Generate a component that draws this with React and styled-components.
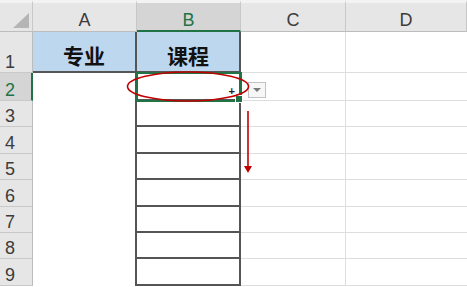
import styled, { createGlobalStyle } from 'styled-components'

const GlobalStyle = createGlobalStyle`
  body {
    margin: 0;
    background: #ffffff;
    overflow: hidden;
    font-family: 'Liberation Sans', Arial, sans-serif;
  }
`

const Sheet = styled.div`
  position: relative;
  width: 467px;
  height: 287px;
  overflow: hidden;
  display: grid;
  grid-template-columns: 33px 104px 104px 105px 1fr;
  grid-template-rows: 32px 41px 28px repeat(7, 26.4px);
  background: #ffffff;
`

const ColHead = styled.div`
  box-sizing: border-box;
  display: flex;
  align-items: center;
  justify-content: center;
  padding-top: 6px;
  background: ${(p) => (p.$active ? '#d5d5d5' : '#e6e6e6')};
  border-right: 1px solid #c8c8c8;
  border-bottom: ${(p) => (p.$active ? '2px solid #217346' : '1px solid #bdbdbd')};
  border-top: 3px solid #f3f3f3;
  color: ${(p) => (p.$active ? '#217346' : '#3c3c3c')};
  font-size: 18px;
  line-height: 1;
`

const Corner = styled(ColHead)`
  position: relative;
  padding: 0;
`

const CornerMark = styled.div`
  position: absolute;
  right: 3px;
  bottom: 3px;
  width: 0;
  height: 0;
  border-left: 16px solid transparent;
  border-bottom: 15px solid #b5b5b5;
`

const RowHead = styled.div`
  box-sizing: border-box;
  display: flex;
  align-items: flex-end;
  padding: 0 0 1px 5px;
  background: ${(p) => (p.$active ? '#d5d5d5' : '#e6e6e6')};
  border-right: ${(p) => (p.$active ? '2px solid #217346' : '1px solid #bcbcbc')};
  border-bottom: 1px solid #c9c9c9;
  color: ${(p) => (p.$active ? '#217346' : '#3c3c3c')};
  font-size: 18px;
  line-height: 1;
`

const Cell = styled.div`
  position: relative;
  box-sizing: border-box;
  display: flex;
  align-items: center;
  justify-content: center;
  padding-top: ${(p) => (p.$title ? '6px' : '0')};
  background: ${(p) => (p.$title ? '#bdd7ee' : '#ffffff')};
  border-right: ${(p) => (p.$right === 'dark' ? '2px solid #555555' : p.$right === 'none' ? '0' : '1px solid #dedede')};
  border-bottom: ${(p) => (p.$bottom === 'dark' ? '2px solid #555555' : p.$bottom === 'none' ? '0' : '1px solid #dedede')};
  outline: ${(p) => (p.$selected ? '2px solid #217346' : 'none')};
  outline-offset: -1px;
  z-index: ${(p) => (p.$selected ? 2 : 0)};
  color: #111111;
  font-family: 'Noto Sans CJK SC', 'Liberation Sans', sans-serif;
  font-size: 21px;
  font-weight: 700;
`

const FillHandle = styled.div`
  position: absolute;
  right: -4px;
  bottom: -4px;
  width: 6px;
  height: 6px;
  background: #217346;
  border: 1px solid #ffffff;
`

const Plus = styled.span`
  position: absolute;
  right: 4px;
  bottom: 2px;
  font-family: 'Liberation Sans', sans-serif;
  font-size: 11px;
  font-weight: 700;
  color: #222222;
  line-height: 1;
`

const DropButton = styled.div`
  position: absolute;
  left: 248px;
  top: 82px;
  width: 18px;
  height: 16px;
  box-sizing: border-box;
  border: 1px solid #c2c2c2;
  background: #f7f7f7;
  display: flex;
  align-items: center;
  justify-content: center;
  z-index: 3;
`

const DropArrow = styled.div`
  width: 0;
  height: 0;
  border-left: 4px solid transparent;
  border-right: 4px solid transparent;
  border-top: 4px solid #7a7a7a;
`

const Overlay = styled.svg`
  position: absolute;
  left: ${(p) => p.$x}px;
  top: ${(p) => p.$y}px;
  z-index: 4;
  overflow: visible;
`

const cols = ['A', 'B', 'C', 'D']

function bodyRow(n) {
  return (
    <>
      <RowHead key={'h' + n} $active={n === 2}>{n}</RowHead>
      <Cell $right="dark" $bottom="none" />
      <Cell $right="dark" $bottom="dark" $selected={n === 2}>
        {n === 2 && (
          <>
            <Plus>+</Plus>
            <FillHandle />
          </>
        )}
      </Cell>
      <Cell />
      <Cell $right="none" />
    </>
  )
}

export default function App() {
  return (
    <>
      <GlobalStyle />
      <Sheet>
        <Corner>
          <CornerMark />
        </Corner>
        {cols.map((c) => (
          <ColHead key={c} $active={c === 'B'}>
            {c}
          </ColHead>
        ))}

        <RowHead>1</RowHead>
        <Cell $title $right="dark" $bottom="dark">专业</Cell>
        <Cell $title $right="dark" $bottom="dark">课程</Cell>
        <Cell />
        <Cell $right="none" />

        {[2, 3, 4, 5, 6, 7, 8, 9].map((n) => bodyRow(n))}

        <DropButton>
          <DropArrow />
        </DropButton>

        <Overlay $x={126} $y={71} width="124" height="31" viewBox="0 0 124 31">
          <ellipse cx="62" cy="15.5" rx="60.5" ry="14.5" fill="none" stroke="#c00000" strokeWidth="1.6" />
        </Overlay>

        <Overlay $x={242} $y={110} width="12" height="64" viewBox="0 0 12 64">
          <line x1="6" y1="1" x2="6" y2="58" stroke="#c00000" strokeWidth="1.6" />
          <polygon points="2,56 10,56 6,63" fill="#c00000" />
        </Overlay>
      </Sheet>
    </>
  )
}
